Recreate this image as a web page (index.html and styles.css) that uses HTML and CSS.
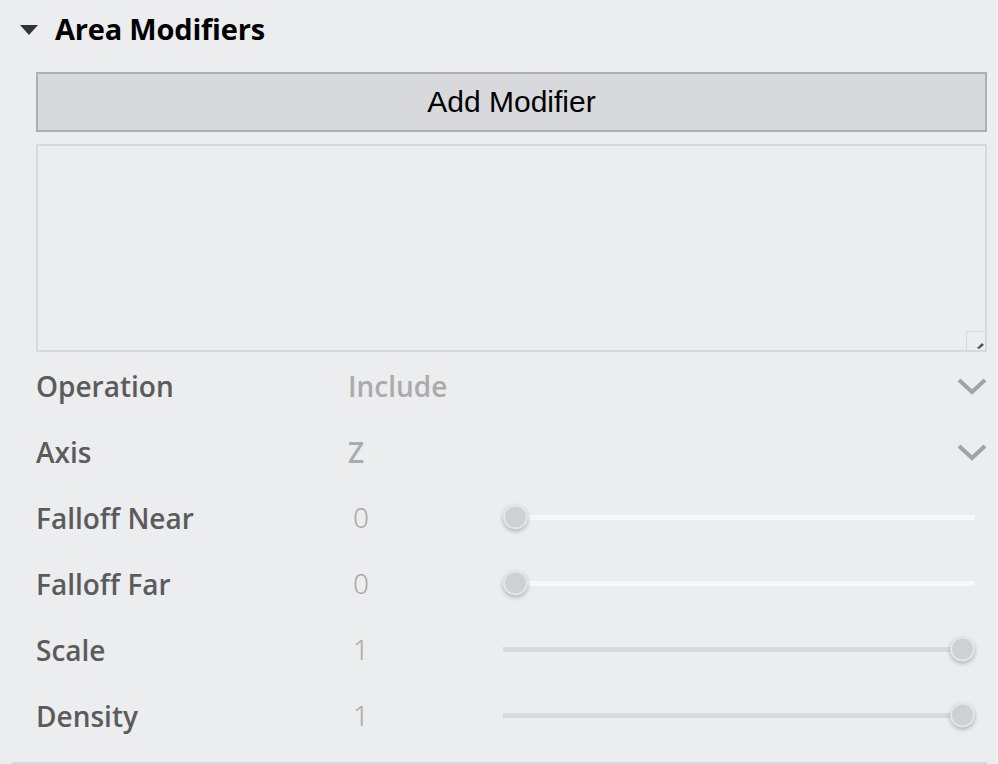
FILE: index.html
```html
<!DOCTYPE html>
<html>
<head>
<meta charset="utf-8">
<link rel="stylesheet" href="styles.css">
</head>
<body>
<div class="panel">
  <div class="section-head">
    <span class="caret"></span>
    <span class="section-title">Area Modifiers</span>
  </div>
  <div class="section-body">
    <button class="add-btn">Add Modifier</button>
    <div class="list-box"><span class="grip"><svg width="10" height="10" viewBox="0 0 10 10"><path d="M2 8 L7 3 L9 5 L4 9 Z" fill="#555"/></svg></span></div>
    <div class="row">
      <span class="label">Operation</span>
      <div class="select"><span class="sel-value">Include</span>
        <svg class="chev" width="30" height="18" viewBox="0 0 30 18"><path d="M2 3 L15 15 L28 3" fill="none" stroke="#a3a3a3" stroke-width="4"/></svg></div>
    </div>
    <div class="row">
      <span class="label">Axis</span>
      <div class="select"><span class="sel-value">Z</span>
        <svg class="chev" width="30" height="18" viewBox="0 0 30 18"><path d="M2 3 L15 15 L28 3" fill="none" stroke="#a3a3a3" stroke-width="4"/></svg></div>
    </div>
    <div class="row">
      <span class="label">Falloff Near</span>
      <span class="num">0</span>
      <div class="slider light"><span class="thumb" style="left:0%"></span></div>
    </div>
    <div class="row">
      <span class="label">Falloff Far</span>
      <span class="num">0</span>
      <div class="slider light"><span class="thumb" style="left:0%"></span></div>
    </div>
    <div class="row">
      <span class="label">Scale</span>
      <span class="num">1</span>
      <div class="slider"><span class="thumb" style="left:100%"></span></div>
    </div>
    <div class="row">
      <span class="label">Density</span>
      <span class="num">1</span>
      <div class="slider"><span class="thumb" style="left:100%"></span></div>
    </div>
  </div>
  <div class="divider"></div>
</div>
</body>
</html>
```
FILE: styles.css
```css
html, body {
  margin: 0;
  padding: 0;
  background: #ecedef;
  height: 100%;
  overflow: hidden;
}
body {
  font-family: "Open Sans", "Noto Sans", sans-serif;
}
.panel {
  padding: 0 10px 0 12px;
  border-right: 1px solid #f4f4f6;
  height: 100%;
  box-sizing: border-box;
}
.section-head {
  display: flex;
  align-items: center;
  height: 58px;
  padding-left: 8px;
}
.caret {
  width: 0;
  height: 0;
  border-left: 9px solid transparent;
  border-right: 9px solid transparent;
  border-top: 10px solid #333;
  margin-right: 17px;
  margin-top: 2px;
}
.section-title {
  font-weight: 700;
  font-size: 29px;
  color: #000;
  letter-spacing: -0.2px;
  margin-top: -2px;
}
.section-body {
  padding-left: 24px;
  display: flex;
  flex-direction: column;
}
.add-btn {
  margin-top: 14px;
  height: 60px;
  border: 2px solid #aeafb6;
  background: #d8d9dd;
  font-family: "Liberation Sans", Arial, sans-serif;
  font-size: 30px;
  color: #000;
  padding: 0;
}
.list-box {
  margin-top: 12px;
  height: 208px;
  border: 2px solid #d8d9dc;
  box-sizing: border-box;
  position: relative;
}
.grip {
  position: absolute;
  right: 0;
  bottom: 0;
  width: 19px;
  height: 19px;
  border-left: 1px solid #d8d9dc;
  border-top: 1px solid #d8d9dc;
  box-sizing: border-box;
  display: flex;
  align-items: flex-end;
  justify-content: flex-end;
}
.row {
  display: flex;
  align-items: center;
  height: 66px;
}
.label {
  width: 312px;
  flex: none;
  font-size: 28px;
  font-weight: 600;
  color: #5b5b5b;
  padding-top: 2px;
}
.select {
  flex: 1;
  display: flex;
  align-items: center;
  justify-content: space-between;
}
.sel-value {
  font-size: 28px;
  font-weight: 600;
  color: #ababab;
  padding-top: 1px;
}
.chev { margin-top: 2px; }
.num {
  width: 150px;
  flex: none;
  padding-left: 5px;
  box-sizing: border-box;
  font-family: "Noto Sans", sans-serif;
  font-weight: 300;
  font-size: 28px;
  color: #a9a9a9;
}
.slider {
  position: relative;
  width: 472px;
  height: 5px;
  background: #d8d9dc;
  margin-left: 5px;
}
.slider.light { background: #f8f8f9; }
.thumb {
  position: absolute;
  top: 50%;
  width: 21px;
  height: 21px;
  border-radius: 50%;
  background: #cfd0d4;
  border: 2px solid #e4e5e8;
  box-shadow: 0 2px 4px rgba(0,0,0,0.25);
  transform: translate(0, -50%);
}
.thumb[style="left:100%"] { transform: translate(-100%, -50%); }
.divider {
  height: 2px;
  background: #d8d9dc;
  margin-top: 14px;
}
```
